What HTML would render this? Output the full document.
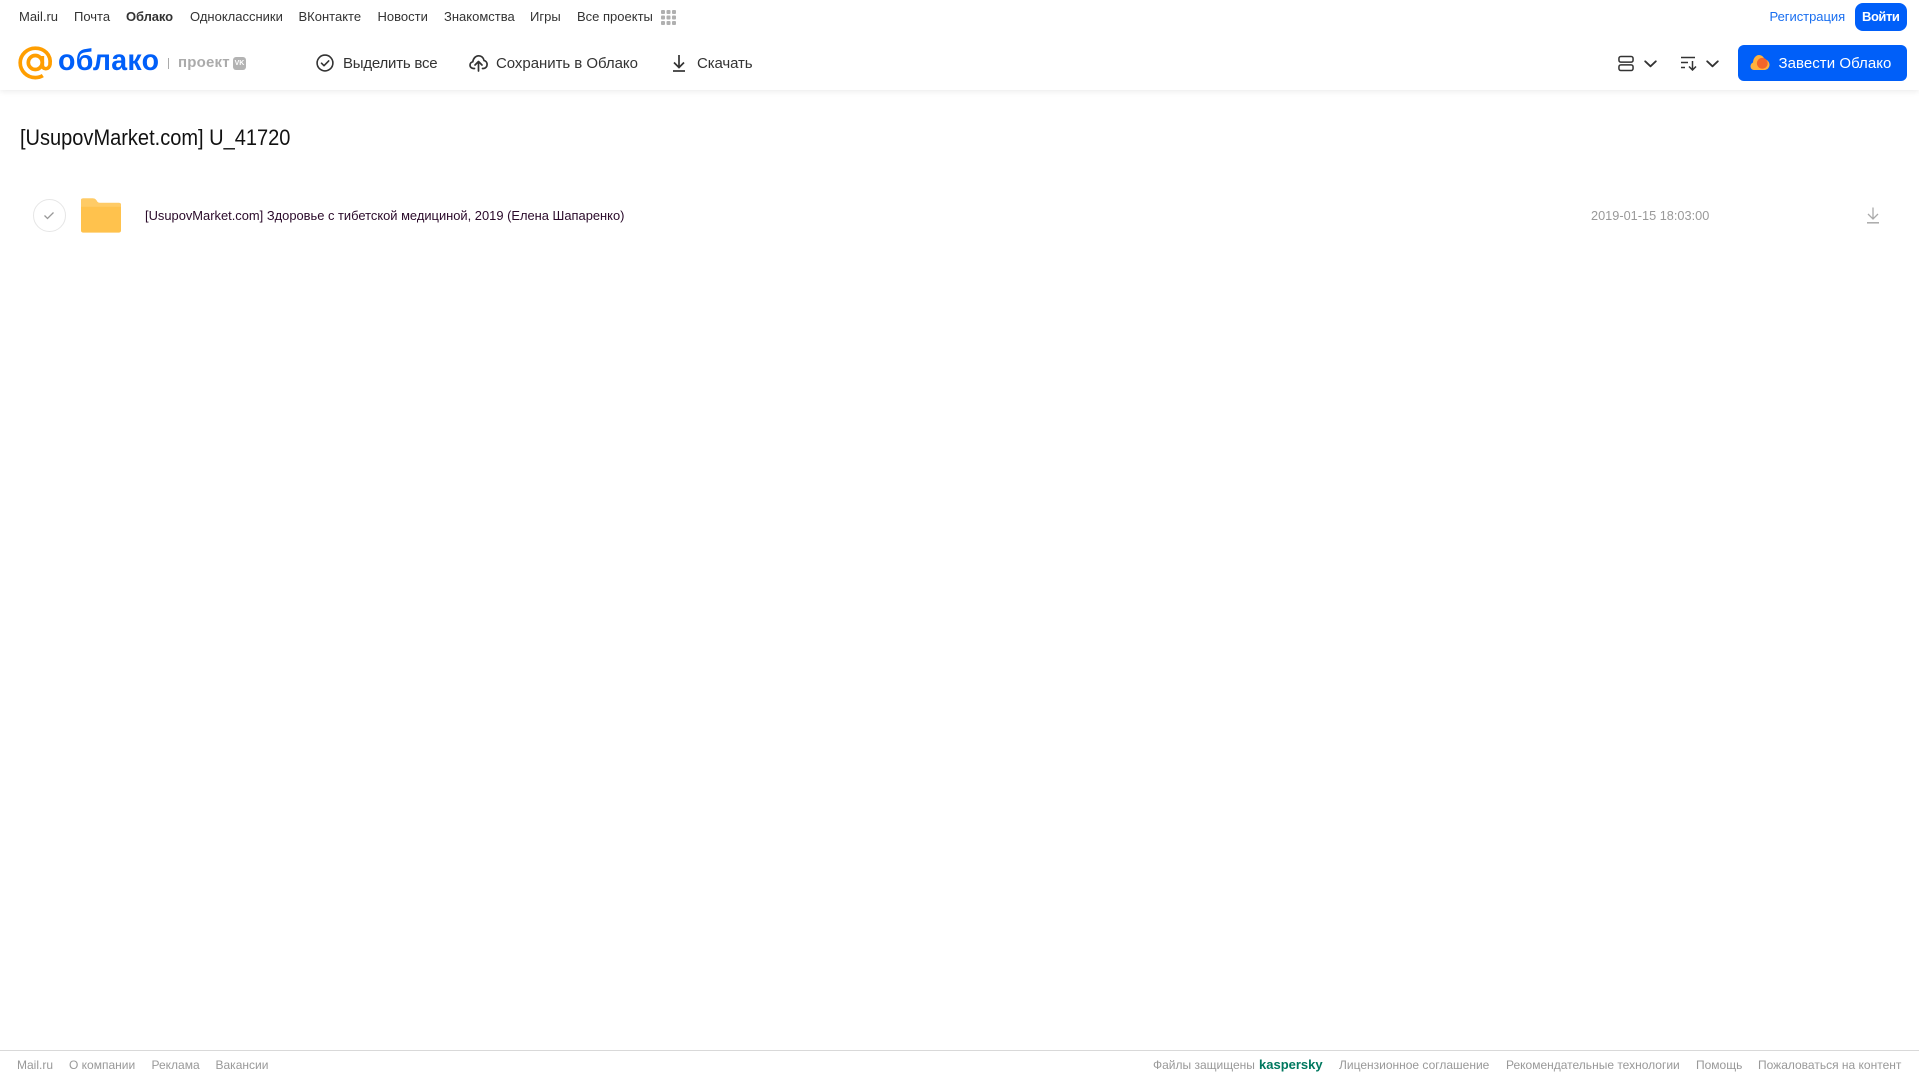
<!DOCTYPE html>
<html lang="ru">
<head>
<meta charset="utf-8">
<title>Облако</title>
<style>
html,body{margin:0;padding:0;background:#fff;width:1919px;height:1079px;overflow:hidden}
body{font-family:"Liberation Sans",sans-serif;position:relative}
.t{position:absolute;white-space:nowrap;line-height:16px}
.n{top:9px;font-size:13px;color:#333}
.b{top:55px;font-size:15px;color:#333;letter-spacing:-.12px;line-height:16px;margin-top:0}
.f{top:1057px;font-size:12px;color:#999}
svg{position:absolute;display:block}
#hdr{position:absolute;left:0;top:0;width:1919px;height:90px;background:#fff;box-shadow:0 1px 6px rgba(0,0,0,.09)}
</style>
</head>
<body>
<div id="hdr"></div>

<span class="t n" style="left:19px">Mail.ru</span>
<span class="t n" style="left:74px">Почта</span>
<span class="t n" style="left:126px;font-weight:bold;letter-spacing:-.1px">Облако</span>
<span class="t n" style="left:190px">Одноклассники</span>
<span class="t n" style="left:298.500px">ВКонтакте</span>
<span class="t n" style="left:377.500px">Новости</span>
<span class="t n" style="left:444px">Знакомства</span>
<span class="t n" style="left:530px">Игры</span>
<span class="t n" style="left:577px">Все проекты</span>
<svg style="left:661px;top:10px" width="15" height="15" viewBox="0 0 15 15" fill="#b0b0b0">
<rect x="0" y="0" width="4" height="4" rx="1"/><rect x="5.500" y="0" width="4" height="4" rx="1"/><rect x="11" y="0" width="4" height="4" rx="1"/>
<rect x="0" y="5.500" width="4" height="4" rx="1"/><rect x="5.500" y="5.500" width="4" height="4" rx="1"/><rect x="11" y="5.500" width="4" height="4" rx="1"/>
<rect x="0" y="11" width="4" height="4" rx="1"/><rect x="5.500" y="11" width="4" height="4" rx="1"/><rect x="11" y="11" width="4" height="4" rx="1"/>
</svg>

<span class="t n" style="left:1769.500px;color:#1a6ff0;letter-spacing:-.03px">Регистрация</span>
<div style="position:absolute;left:1855px;top:3px;width:52px;height:28px;border-radius:8px;background:#005ff9"></div>
<span class="t n" style="left:1862px;color:#fff;font-weight:bold;letter-spacing:-.45px">Войти</span>

<!-- logo -->
<svg style="left:18px;top:46px" width="35" height="34" viewBox="0 0 35 34" fill="none" stroke="#ff9e00" stroke-width="3.700">
<circle cx="17.300" cy="16.500" r="7"/>
<path d="M24.300 10v9c0 5 6.800 5 7.700-.5C33.400 8.500 26 2.200 17.300 2.200 9 2.200 2.200 8.800 2.200 16.800c0 8 6.500 14.800 15.100 14.800 3 0 5.500-.7 7.500-2"/>
</svg>
<span class="t" style="left:58px;top:43px;font-size:30px;line-height:36px;color:#005ff9;font-weight:bold;letter-spacing:.3px;transform-origin:0 50%;transform:scaleX(.95)">облако</span>
<div style="position:absolute;left:168px;top:58px;width:1px;height:11px;background:#aaa"></div>
<span class="t" style="left:178px;top:55px;font-size:15px;color:#ababab;font-weight:bold;letter-spacing:.2px">проект</span>
<div style="position:absolute;left:233px;top:57px;width:13px;height:13px;border-radius:3px;background:#b3b3b3"></div>
<span class="t" style="left:233px;top:57px;width:13px;height:13px;line-height:13px;text-align:center;font-size:7px;font-weight:bold;color:#fff">VK</span>

<!-- toolbar -->
<svg style="left:316px;top:54px" width="18" height="18" viewBox="0 0 18 18" fill="none" stroke="#333" stroke-width="1.600">
<circle cx="9" cy="9" r="7.900"/><path d="M5.500 9.200l2.500 2.500 4.700-4.800" stroke-linecap="round" stroke-linejoin="round"/>
</svg>
<span class="t b" style="left:343px;top:56px;letter-spacing:-.22px">Выделить все</span>

<svg style="left:469px;top:54px" width="19" height="18" viewBox="0 0 19 18" fill="none" stroke="#333" stroke-width="1.700" stroke-linecap="round" stroke-linejoin="round">
<path d="M5.500 14.500H4.500C2.500 14.500 1 13 1 11.100c0-1.700 1.200-3 2.800-3.300C4.300 4.300 6.600 1.800 9.600 1.800c2.800 0 5 2 5.500 4.800 1.700.3 3 1.900 3 3.900 0 2.200-1.600 4-3.700 4h-.9"/>
<path d="M9.500 17V8M6 11l3.500-3.500L13 11"/>
</svg>
<span class="t b" style="left:496px;top:56px;letter-spacing:-.04px">Сохранить в Облако</span>

<svg style="left:672px;top:54px" width="14" height="18" viewBox="0 0 14 18" fill="none" stroke="#333" stroke-width="1.700">
<path d="M7 1v12M2 8.500l5 5 5-5"/><path d="M1 17h12"/>
</svg>
<span class="t b" style="left:697px;top:56px">Скачать</span>

<svg style="left:1618px;top:55px" width="16" height="17" viewBox="0 0 17 17" fill="none" stroke="#333" stroke-width="1.600">
<rect x="1" y="1" width="15" height="6" rx="2"/><rect x="1" y="10" width="15" height="6" rx="2"/>
</svg>
<svg style="left:1644px;top:60px" width="13" height="8" viewBox="0 0 13 8" fill="none" stroke="#333" stroke-width="1.800" stroke-linecap="round" stroke-linejoin="round">
<path d="M1.200 1.300l5.300 5 5.300-5"/>
</svg>
<svg style="left:1680px;top:56px" width="18" height="15" viewBox="0 0 18 15" fill="none" stroke="#333" stroke-width="1.500">
<path d="M1 1.500h14M1 6.500h7M1 11.500h4"/><path d="M12.500 5v9M9 10.500l3.500 3.500 3.500-3.500"/>
</svg>
<svg style="left:1706px;top:60px" width="13" height="8" viewBox="0 0 13 8" fill="none" stroke="#333" stroke-width="1.800" stroke-linecap="round" stroke-linejoin="round">
<path d="M1.200 1.300l5.300 5 5.300-5"/>
</svg>

<div style="position:absolute;left:1738px;top:45px;width:169px;height:36px;border-radius:6px;background:#005ff9"></div>
<svg style="left:1750px;top:54px" width="20" height="17" viewBox="0 0 20 17">
<path d="M4 16C1.800 16 .5 14.200.5 12.300c0-1.800 1-3.200 2.500-3.800C3.200 4.500 5.700 1 9 1c2.700 0 4.700 1.800 5.500 4.300 2.800.4 5 2.600 5 5.500 0 2.900-2.300 5.200-5 5.200z" fill="#ffb13d"/>
<circle cx="12.300" cy="9.300" r="5.400" fill="#f2652a"/>
</svg>
<span class="t b" style="left:1778.500px;top:56px;color:#fff;letter-spacing:.05px">Завести Облако</span>

<!-- title -->
<span class="t" style="left:20px;top:125px;font-size:22px;line-height:26px;color:#111;transform-origin:0 50%;transform:scaleX(.91)">[UsupovMarket.com] U_41720</span>

<!-- row -->
<div style="position:absolute;left:33px;top:199px;width:31px;height:31px;border:1px solid #e6e6e6;border-radius:50%"></div>
<svg style="left:43px;top:211px" width="12" height="9" viewBox="0 0 12 9" fill="none" stroke="#999" stroke-width="1.300">
<path d="M1.500 4.500l3 3 6-6"/>
</svg>
<svg style="left:81px;top:198px" width="40" height="35" viewBox="0 0 41 35">
<path d="M2 0h10c2 0 3.200 1 4 2.300.7 1.200 1.300 2.200 3 2.200H39c1.200 0 2 .8 2 2V33c0 1.200-.8 2-2 2H2c-1.200 0-2-.8-2-2V2C0 .8.800 0 2 0z" fill="#ffc24d"/>
<path d="M0 8.500h41v-2c0-1.200-.8-2-2-2H19c-1.700 0-2.300-1-3-2.200C15.200 1 14 0 12 0H2C.8 0 0 .8 0 2z" fill="#ffcb66"/>
</svg>
<span class="t" style="left:145px;top:208px;font-size:13px;color:#2a0a2a;transform-origin:0 50%;transform:scaleX(.992)">[UsupovMarket.com] Здоровье с тибетской медициной, 2019 (Елена Шапаренко)</span>
<span class="t" style="left:1591px;top:208px;font-size:13px;color:#999;transform-origin:0 50%;transform:scaleX(.98)">2019-01-15 18:03:00</span>
<svg style="left:1866px;top:207px" width="14" height="17" viewBox="0 0 14 17" fill="none" stroke="#aaa" stroke-width="1.300">
<path d="M7 .5v11M2 7l5 5 5-5"/><path d="M1 15.800h12" stroke-width="1.500"/>
</svg>

<!-- footer -->
<div style="position:absolute;left:0;top:1050px;width:1919px;height:1px;background:#d9d9d9"></div>
<span class="t f" style="left:17px">Mail.ru</span>
<span class="t f" style="left:69px">О компании</span>
<span class="t f" style="left:151.500px">Реклама</span>
<span class="t f" style="left:215.500px">Вакансии</span>
<span class="t f" style="left:1153px">Файлы защищены</span>
<span class="t f" style="left:1259px;font-size:13px;font-weight:bold;color:#00785f">kaspersky</span>
<span class="t f" style="left:1339px">Лицензионное соглашение</span>
<span class="t f" style="left:1506px">Рекомендательные технологии</span>
<span class="t f" style="left:1696px">Помощь</span>
<span class="t f" style="left:1758px">Пожаловаться на контент</span>
</body>
</html>
